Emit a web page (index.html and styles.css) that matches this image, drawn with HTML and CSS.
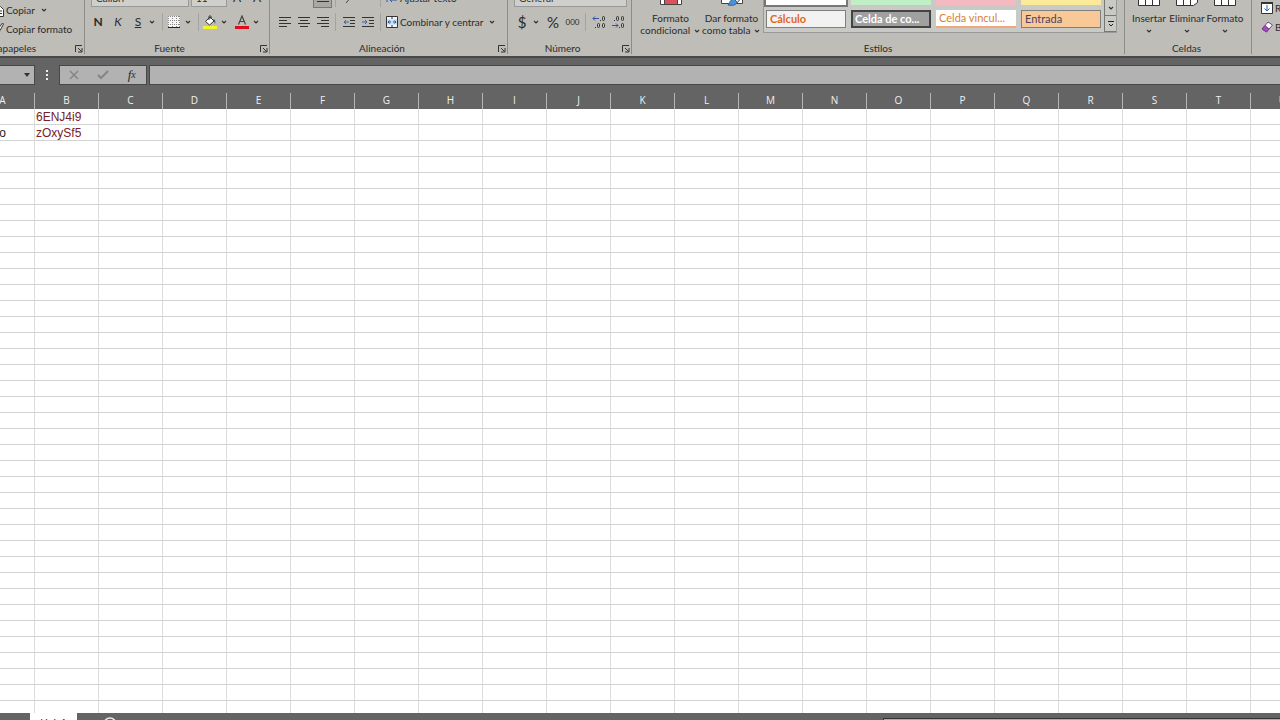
FILE: index.html
```html
<!DOCTYPE html>
<html lang="es">
<head>
	<meta charset="utf-8">
	<title>Libro1</title>
	<link rel="stylesheet" href="styles.css">
	<script>
		var columnas = "ABCDEFGHIJKLMNOPQRSTUVWXYZ";
		var filas = 60;
		var datos = { A2: "o", B1: "6ENJ4i9", B2: "zOxySf5" };

		function deseneazaHoja(){
			var str = "<thead><tr>";
			for(var c=0;c<columnas.length;c++){
				str += `<th scope="col">${columnas[c]}</th>`;
			}
			str += "</tr></thead><tbody>";
			for(var f=1;f<=filas;f++){
				str += "<tr>";
				for(var c=0;c<columnas.length;c++){
					str += `<td>${datos[columnas[c]+f] || ""}</td>`;
				}
				str += "</tr>";
			}
			document.querySelector(".hoja table").innerHTML = str + "</tbody>";
		}
	</script>
</head>
<body onload="deseneazaHoja();">

	<svg class="defs" aria-hidden="true">
		<symbol id="chev" viewBox="0 0 8 8"><path d="M2 3l2 2 2-2" fill="none" stroke="#333" stroke-width="1.2"/></symbol>
		<symbol id="launch" viewBox="0 0 8 8"><path d="M.5 7V.5H7M3 3l3.500 3.500M7 3v4H3" fill="none" stroke="#333"/></symbol>
	</svg>

	<header class="ribbon">
		<section class="group portapapeles">
			<div class="body stack">
				<button class="cmd">
					<svg width="12" height="14" viewBox="0 0 12 14"><path d="M1.500.5h5v2M4.500 3.500h4l3 3v7h-7z" fill="#fff" stroke="#333"/><path d="M6 8h4M6 10.500h4" stroke="#333"/></svg>
					Copiar <svg class="chev far"><use href="#chev"/></svg>
				</button>
				<button class="cmd">
					<svg width="12" height="14" viewBox="0 0 12 14"><path d="M10.500 1L6 7l2 1.500L11.500 2z" fill="#fff" stroke="#333"/><path d="M5.500 7L1 12l4 1 3-4z" fill="#d8a860" stroke="#333"/></svg>
					Copiar formato
				</button>
			</div>
			<div class="label">Portapapeles</div>
			<button class="launch" aria-label="Portapapeles"><svg><use href="#launch"/></svg></button>
		</section>

		<section class="group fuente">
			<div class="body">
				<div class="row">
					<select class="box letra" aria-label="Fuente"><option>Calibri</option></select>
					<select class="box cuerpo" aria-label="Tamaño"><option>11</option></select>
					<button class="tool">A</button>
					<button class="tool">A</button>
				</div>
				<div class="row">
					<button class="tool"><b>N</b></button>
					<button class="tool"><i>K</i></button>
					<button class="tool"><u>S</u></button>
					<svg class="chev"><use href="#chev"/></svg>
					<span class="sep wide"></span>
					<button class="tool" aria-label="Bordes"><svg width="12" height="12" viewBox="0 0 12 12"><path fill="#f4f4f4" d="M0 0h12v12H0z"/><path d="M.5 0v12M4.500 0v12M8.500 0v12M11.500 0v12M0 .5h12M0 4.500h12M0 8.500h12" stroke="#888" stroke-dasharray="1 1" fill="none"/><path d="M0 11.500h12" stroke="#222"/></svg></button>
					<svg class="chev"><use href="#chev"/></svg>
					<span class="sep wide"></span>
					<button class="tool" aria-label="Color de relleno"><svg width="14" height="14" viewBox="0 0 14 14"><path d="M2.500 6.500L7 2l4 4-4.500 4z" fill="#fff" stroke="#333"/><path d="M6 5V1.500c0-1 2-1 2 0V4" fill="none" stroke="#333"/><path d="M10.500 4c2 .5 2 3 1.500 5l-1-3z" fill="#345"/><path fill="#f3f52b" d="M0 11h14v3H0z"/></svg></button>
					<svg class="chev"><use href="#chev"/></svg>
					<button class="tool font-color" aria-label="Color de fuente"><svg width="14" height="14" viewBox="0 0 14 14"><path d="M3.500 9.500L7 1l3.500 8.500M4.500 6.500h5" fill="none" stroke="#444" stroke-width="1.200"/><path fill="#e00b1c" d="M0 11h14v3H0z"/></svg></button>
					<svg class="chev"><use href="#chev"/></svg>
				</div>
			</div>
			<div class="label">Fuente</div>
			<button class="launch" aria-label="Fuente"><svg><use href="#launch"/></svg></button>
		</section>

		<section class="group alineacion">
			<div class="body">
				<div class="row">
					<button class="tool mid"></button>
					<button class="tool mid"></button>
					<button class="tool mid pressed" aria-label="Alinear abajo"><svg width="12" height="12" viewBox="0 0 12 12"><path d="M0 6.500h12M0 9.500h12" stroke="#333"/></svg></button>
					<span class="sep"></span>
					<button class="tool mid" aria-label="Orientación"><svg width="12" height="12" viewBox="0 0 12 12"><path d="M3 11l6-7" stroke="#444"/></svg></button>
					<button class="tool mid"></button>
					<span class="sep"></span>
					<button class="cmd">
						<svg width="12" height="12" viewBox="0 0 12 12"><path d="M1 2v8M11 3v5H4M6 6L4 8l2 2" fill="none" stroke="#2b57a0"/></svg>
						Ajustar texto
					</button>
				</div>
				<div class="row">
					<button class="tool mid" aria-label="Alinear a la izquierda"><svg width="12" height="12" viewBox="0 0 12 12"><path d="M0 1.500h12M0 4.500h8M0 7.500h12M0 10.500h8" stroke="#333"/></svg></button>
					<button class="tool mid" aria-label="Centrar"><svg width="12" height="12" viewBox="0 0 12 12"><path d="M0 1.500h12M2 4.500h8M0 7.500h12M2 10.500h8" stroke="#333"/></svg></button>
					<button class="tool mid" aria-label="Alinear a la derecha"><svg width="12" height="12" viewBox="0 0 12 12"><path d="M0 1.500h12M4 4.500h8M0 7.500h12M4 10.500h8" stroke="#333"/></svg></button>
					<span class="sep"></span>
					<button class="tool mid" aria-label="Disminuir sangría"><svg width="12" height="12" viewBox="0 0 12 12"><path d="M0 1.500h12M7 4.500h5M7 7.500h5M0 10.500h12" stroke="#333"/><path d="M6 6H1M3 4L1 6l2 2" fill="none" stroke="#3d63a8"/></svg></button>
					<button class="tool mid" aria-label="Aumentar sangría"><svg width="12" height="12" viewBox="0 0 12 12"><path d="M0 1.500h12M7 4.500h5M7 7.500h5M0 10.500h12" stroke="#333"/><path d="M0 6h5M3 4l2 2-2 2" fill="none" stroke="#3d63a8"/></svg></button>
					<span class="sep"></span>
					<button class="cmd">
						<svg width="12" height="12" viewBox="0 0 12 12"><path d="M.5.5h11v11H.5z" fill="#eef4fa" stroke="#333"/><path d="M6 0v3M6 9v3" stroke="#333"/><path d="M1 3.500h10v5H1z" fill="#c3dff2"/><path d="M5 6H2M3.500 4.500L2 6l1.500 1.500M7 6h3M8.500 4.500L10 6 8.500 7.500" fill="none" stroke="#245a9c"/></svg>
						Combinar y centrar <svg class="chev far"><use href="#chev"/></svg>
					</button>
				</div>
			</div>
			<div class="label">Alineación</div>
			<button class="launch" aria-label="Alineación"><svg><use href="#launch"/></svg></button>
		</section>

		<section class="group numero">
			<div class="body">
				<div class="row">
					<select class="box formato" aria-label="Formato de número"><option>General</option></select>
				</div>
				<div class="row">
					<button class="tool sign">$</button>
					<svg class="chev"><use href="#chev"/></svg>
					<button class="tool sign after">%</button>
					<button class="tool mid miles">000</button>
					<span class="sep"></span>
					<button class="tool mid" aria-label="Aumentar decimales"><svg width="14" height="14" viewBox="0 0 14 14"><path d="M7 3.500H1M3 1.500l-2 2 2 2" fill="none" stroke="#3452a8"/><path d="M8.500 5v1M3.500 12v1" stroke="#333"/><rect x="10.500" y="1.500" width="2" height="4" rx="1" fill="none" stroke="#333"/><rect x="5.500" y="8.500" width="2" height="4" rx="1" fill="none" stroke="#333"/><rect x="10.500" y="8.500" width="2" height="4" rx="1" fill="none" stroke="#333"/></svg></button>
					<button class="tool mid" aria-label="Disminuir decimales"><svg width="14" height="14" viewBox="0 0 14 14"><path d="M1 10.500h6M5 8.500l2 2-2 2" fill="none" stroke="#3452a8"/><path d="M3.500 5v1M8.500 12v1" stroke="#333"/><rect x="5.500" y="1.500" width="2" height="4" rx="1" fill="none" stroke="#333"/><rect x="10.500" y="1.500" width="2" height="4" rx="1" fill="none" stroke="#333"/><rect x="10.500" y="8.500" width="2" height="4" rx="1" fill="none" stroke="#333"/></svg></button>
				</div>
			</div>
			<div class="label">Número</div>
			<button class="launch" aria-label="Número"><svg><use href="#launch"/></svg></button>
		</section>

		<section class="group estilos">
			<div class="body bigs">
				<button class="big">
					<svg width="24" height="24" viewBox="0 0 24 24"><path d="M1.500.5h21v22h-21z" fill="#fff" stroke="#444"/><path d="M5 1h13v21H5z" fill="#e0505c"/><path d="M5.500 1v21M18.500 1v21" stroke="#444"/></svg>
					<span>Formato<br>condicional <svg class="chev"><use href="#chev"/></svg></span>
				</button>
				<button class="big">
					<svg width="24" height="24" viewBox="0 0 24 24"><path d="M1.500.5h21v21h-21z" fill="#fff" stroke="#444"/><path d="M22 11l-9 8 3 3 8-9z" fill="#eee" stroke="#444"/><path d="M14 17c-3 0-4 3-6 6 4 1 9 0 9-3z" fill="#4b92d3" stroke="#2c65a0"/></svg>
					<span>Dar formato<br>como tabla <svg class="chev"><use href="#chev"/></svg></span>
				</button>
				<div class="galeria">
					<div class="muestras">
						<button class="muestra normal" aria-label="Normal"></button>
						<button class="muestra buena" aria-label="Buena"></button>
						<button class="muestra mala" aria-label="Incorrecto"></button>
						<button class="muestra neutral" aria-label="Neutral"></button>
						<button class="muestra calculo">Cálculo</button>
						<button class="muestra celda">Celda de co...</button>
						<button class="muestra vinculada">Celda vincul...</button>
						<button class="muestra entrada">Entrada</button>
					</div>
					<div class="flechas">
						<button aria-label="Fila anterior"></button>
						<button aria-label="Fila siguiente"><svg class="chev"><use href="#chev"/></svg></button>
						<button aria-label="Más"><svg width="8" height="8" viewBox="0 0 8 8"><path d="M1 1.500h6M2 4l2 2 2-2" fill="none" stroke="#222"/></svg></button>
					</div>
				</div>
			</div>
			<div class="label">Estilos</div>
		</section>

		<section class="group celdas">
			<div class="body bigs">
				<button class="big">
					<svg width="24" height="22" viewBox="0 0 24 22"><path d="M1.500 3.500h21v18h-21zM8.500 3v18M15.500 3v18M1 14.500h22" fill="#fff" stroke="#333"/></svg>
					<span>Insertar<br><svg class="chev"><use href="#chev"/></svg></span>
				</button>
				<button class="big">
					<svg width="24" height="22" viewBox="0 0 24 22"><path d="M1.500 3.500h21v15l-4 3h-17zM8.500 3v18M15.500 3v18M1 14.500h22" fill="#fff" stroke="#333"/></svg>
					<span>Eliminar<br><svg class="chev"><use href="#chev"/></svg></span>
				</button>
				<button class="big">
					<svg width="24" height="22" viewBox="0 0 24 22"><path d="M1.500 3.500h21v18h-21zM8.500 3v18M15.500 3v18M1 14.500h22" fill="#fff" stroke="#333"/></svg>
					<span>Formato<br><svg class="chev"><use href="#chev"/></svg></span>
				</button>
			</div>
			<div class="label">Celdas</div>
		</section>

		<section class="group edicion">
			<div class="body stack">
				<button class="cmd">
					<svg width="12" height="12" viewBox="0 0 12 12"><path d="M.5.5h11v11H.5z" fill="#fff" stroke="#333"/><path d="M0 1h12" stroke="#333" stroke-width="2"/><path d="M6 3v6M3.500 6.500L6 9l2.500-2.500" fill="none" stroke="#2b66b0"/></svg>
					Rellenar
				</button>
				<button class="cmd">
					<svg width="12" height="12" viewBox="0 0 12 12"><path d="M7 1l4.500 3-6 7L1 8z" fill="#fff" stroke="#7c3a94"/><path d="M4 4.500L8 8l-2.500 3L1 8z" fill="#a04fb8" stroke="#7c3a94"/></svg>
					Borrar
				</button>
			</div>
		</section>
	</header>

	<div class="formulas">
		<button class="nombre" aria-label="Cuadro de nombres"><svg width="8" height="8" viewBox="0 0 8 8"><path d="M1 2h6L4 6z" fill="#333"/></svg></button>
		<svg class="puntos" width="2" height="10" viewBox="0 0 2 10"><path d="M0 0h2v2H0zM0 4h2v2H0zM0 8h2v2H0z" fill="#eee"/></svg>
		<div class="acciones">
			<button aria-label="Cancelar"><svg width="10" height="10" viewBox="0 0 10 10"><path d="M1 1l8 8M9 1L1 9" stroke="#858585" stroke-width="1.500"/></svg></button>
			<button aria-label="Introducir"><svg width="12" height="10" viewBox="0 0 12 10"><path d="M1 5l3 3 7-7" fill="none" stroke="#858585" stroke-width="2"/></svg></button>
			<button class="fx"><i>f</i><small>x</small></button>
		</div>
		<input class="formula" type="text" aria-label="Barra de fórmulas">
	</div>

	<main class="hoja">
		<table></table>
	</main>

	<footer class="pie">
		<button class="pestana">Hoja1</button>
		<button class="nueva" aria-label="Hoja nueva"><svg width="14" height="14" viewBox="0 0 14 14"><circle cx="7" cy="7" r="6" fill="none" stroke="#eee" stroke-width="1.500"/><path d="M7 4v6M4 7h6" stroke="#eee"/></svg></button>
		<div class="desplazar"></div>
	</footer>

</body>
</html>
```
FILE: styles.css
```css
* {
	box-sizing: border-box;
}
body {
	margin: 0;
	height: 100vh;
	display: flex;
	flex-direction: column;
	overflow: hidden;
	background: #646464;
	font-family: Lato, "Open Sans", sans-serif;
	font-size: 10px;
	line-height: 12px;
	color: #2b2b2b;
}
button {
	margin: 0;
	padding: 0;
	border: 0;
	background: none;
	font: inherit;
	color: inherit;
}
.defs {
	display: none;
}

/* cinta */
.ribbon {
	flex: none;
	display: flex;
	height: 58px;
	padding-bottom: 2px;
	overflow: hidden;
	background: #bebdb7;
	border-bottom: 2px solid #484848;
}
.group {
	position: relative;
	flex: none;
	display: flex;
	flex-direction: column;
	justify-content: flex-end;
	border-right: 1px solid #8c8c88;
}
.portapapeles { width: 154px; margin-left: -69px; }
.fuente { width: 185px; padding-left: 3px; }
.alineacion { width: 238px; padding-left: 5px; }
.numero { width: 124px; padding-left: 4px; }
.estilos { width: 493px; padding-left: 8px; }
.celdas { width: 127px; padding-left: 5px; }
.edicion { flex: 1 0 0; padding-left: 7px; border-right: 0; }

.body {
	flex: none;
	padding-bottom: 2px;
}
.stack {
	padding-bottom: 0;
	margin-bottom: 18px;
}
.portapapeles .stack {
	padding-left: 59px;
	margin-bottom: -2px;
}
.bigs {
	display: flex;
	align-items: flex-end;
	padding-bottom: 0;
}
.label {
	flex: none;
	margin: 6px 18px 0 0;
	height: 12px;
	text-align: center;
}
.portapapeles .label {
	margin-right: 0;
}
.estilos .label,
.celdas .label {
	margin-right: 8px;
}
.launch {
	position: absolute;
	right: 1px;
	bottom: 1px;
	width: 8px;
	height: 8px;
}
.launch svg {
	display: block;
	width: 8px;
	height: 8px;
}
.row {
	display: flex;
	align-items: center;
	height: 24px;
}
.tool {
	flex: none;
	display: flex;
	align-items: center;
	justify-content: center;
	width: 20px;
	height: 20px;
	font-size: 12px;
}
.mid { width: 19px; }
.tool.miles { font-size: 8px; }
.tool.sign { font-size: 15px; }
.after { margin-left: 3px; }
.font-color { margin-left: 4px; }
.pressed {
	background: #a8a8a4;
	border: 1px solid #777;
}
.chev {
	flex: none;
	width: 8px;
	height: 8px;
}
.far { margin-left: 3px; }
.sep {
	flex: none;
	width: 1px;
	height: 18px;
	margin: 0 3px;
	background: #a3a39f;
}
.sep.wide { margin: 0 1px 0 6px; }
.cmd {
	display: flex;
	align-items: center;
	gap: 2px;
	height: 19px;
	padding-left: 2px;
	white-space: nowrap;
}
.box {
	appearance: none;
	height: 18px;
	padding: 0 4px;
	border: 1px solid #999;
	border-radius: 0;
	background: #cfcfcc;
	font: inherit;
	color: inherit;
}
.letra { width: 98px; margin-left: 3px; }
.cuerpo { width: 36px; margin-left: 2px; }
.formato { width: 113px; margin-left: 2px; }

.big {
	display: flex;
	flex-direction: column;
	align-items: center;
	gap: 6px;
	width: 61px;
	white-space: nowrap;
}
.big .chev {
	vertical-align: middle;
}
.celdas .big { width: 38px; }

.galeria {
	display: flex;
	margin: 0 0 3px 1px;
	border: 1px solid #999;
	background: #c9c9c5;
}
.muestras {
	display: grid;
	grid-template-columns: repeat(4, 80px);
	grid-auto-rows: 18px;
	gap: 5px;
	padding: 3px 3px 4px 2px;
}
.muestra {
	padding: 0 3px;
	font-size: 11px;
	text-align: left;
	white-space: nowrap;
}
.normal { background: #fff; outline: 2px solid #777; }
.buena { background: #c0efc6; }
.mala { background: #f5b9c1; }
.neutral { background: #fbeb98; }
.calculo { background: #f2f2f2; border: 1px solid #7f7f7f; color: #e0681a; font-weight: bold; }
.celda { background: #a0a0a0; border: 2px double #444; padding: 0 2px; color: #fff; font-weight: bold; }
.vinculada { background: #fff; border-bottom: 2px solid #f3a77c; color: #dc8030; }
.entrada { background: #f8c996; border: 1px solid #7f7f7f; color: #4b4262; }
.flechas {
	display: flex;
	flex-direction: column;
	width: 12px;
	border-left: 1px solid #777;
}
.flechas button {
	flex: 1;
	display: flex;
	align-items: center;
	justify-content: center;
	border-bottom: 1px solid #777;
}

/* barra de formulas */
.formulas {
	flex: none;
	display: flex;
	align-items: center;
	height: 35px;
	padding-bottom: 2px;
}
.nombre,
.acciones,
.formula {
	height: 20px;
	background: #b2b2b2;
	border: 1px solid #484848;
}
.nombre {
	width: 35px;
	padding-right: 3px;
	border-left: 0;
	text-align: right;
}
.puntos { margin: 0 11px; }
.acciones {
	display: flex;
	width: 88px;
}
.acciones button {
	flex: 1;
	display: flex;
	align-items: center;
	justify-content: center;
}
.fx {
	font-family: "Liberation Serif", serif;
	font-size: 13px;
}
.fx small { font-size: 10px; font-style: italic; }
.formula {
	flex: 1;
	min-width: 0;
	margin-left: 2px;
	border-right: 0;
	border-radius: 0;
	outline: 0;
}

/* hoja */
.hoja {
	flex: 1;
	min-height: 0;
	overflow: hidden;
	background: #fff;
}
.hoja table {
	width: 1664px;
	margin-left: -29px;
	table-layout: fixed;
	border-collapse: separate;
	border-spacing: 0;
}
.hoja th {
	height: 16px;
	padding: 0 0 2px;
	background: #646464;
	border-right: 1px solid #b4b4b4;
	color: #f0f0f0;
	font-family: "Open Sans", sans-serif;
	font-weight: normal;
	line-height: 14px;
}
.hoja td {
	height: 16px;
	padding: 1px 1px 0;
	border-right: 1px solid #dcdcdc;
	border-bottom: 1px solid #d2d2d2;
	font-family: "Liberation Sans", Arial, sans-serif;
	font-size: 12px;
	line-height: 14px;
	color: #7a2024;
}
.hoja td:first-child {
	text-align: center;
	color: #222;
}

/* pie */
.pie {
	flex: none;
	display: flex;
	align-items: flex-start;
	height: 7px;
	overflow: hidden;
}
.pestana {
	width: 47px;
	height: 18px;
	margin-left: 30px;
	background: #fff;
}
.nueva { margin: 4px 0 0 26px; }
.nueva svg { display: block; }
.desplazar {
	width: 31%;
	height: 16px;
	margin: 5px 0 0 auto;
	border: 1px solid #333;
	border-right: 0;
	background: #aaa;
}
```
